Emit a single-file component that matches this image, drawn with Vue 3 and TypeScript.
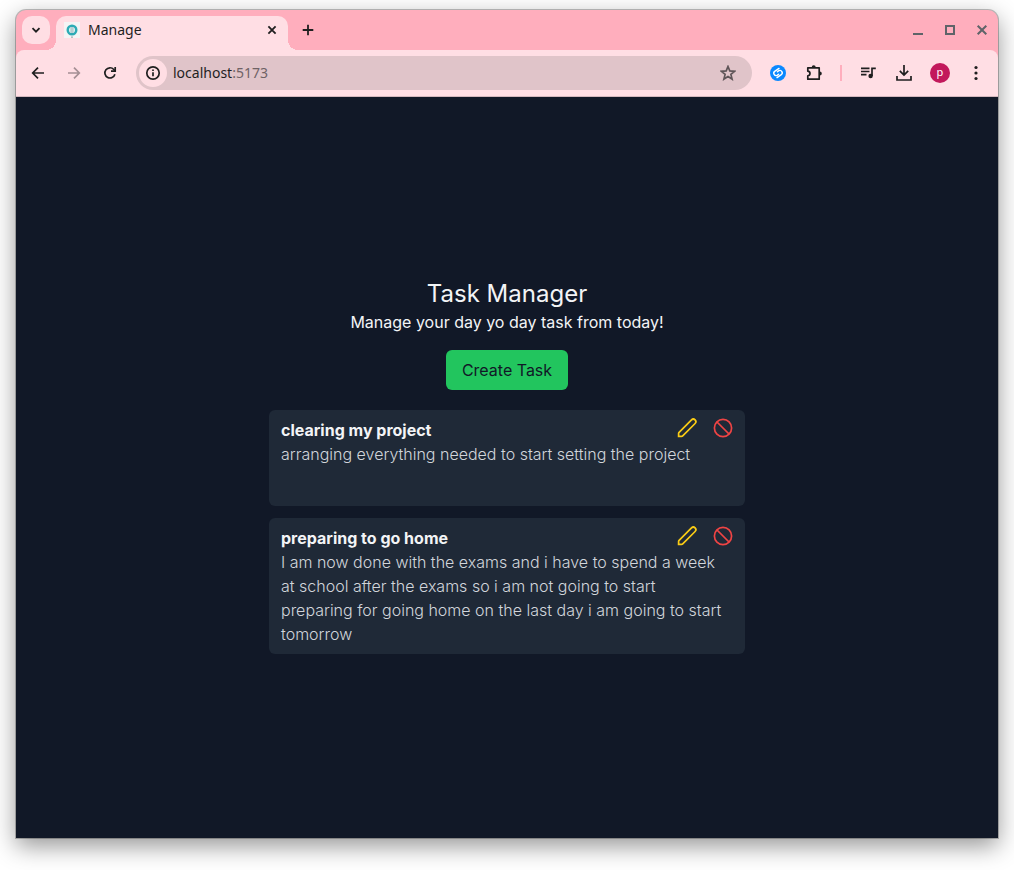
<script setup lang="ts">
import { ref } from 'vue'

interface Task {
  id: number
  title: string
  description: string
}

const address = ref('localhost:5173')

const tasks = ref<Task[]>([
  {
    id: 1,
    title: 'clearing my project',
    description: 'arranging everything needed to start setting the project',
  },
  {
    id: 2,
    title: 'preparing to go home',
    description:
      'I am now done with the exams and i have to spend a week at school after the exams so i am not going to start preparing for going home on the last day i am going to start tomorrow',
  },
])

function removeTask(id: number): void {
  tasks.value = tasks.value.filter((task) => task.id !== id)
}
</script>

<template>
  <div class="desktop">
    <div class="window">
      <header class="tab-strip">
        <button class="tab-search" type="button" aria-label="Search tabs">
          <svg width="16" height="16" viewBox="0 0 16 16"><path d="M4.5 6.2 8 9.7l3.5-3.5" /></svg>
        </button>
        <div class="tab">
          <svg class="favicon" width="16" height="16" viewBox="0 0 16 16">
            <rect width="16" height="16" fill="#f4f4f4" stroke="none" />
            <circle cx="8" cy="8" r="4.3" fill="#d9eff0" stroke="#2cabb5" />
            <rect x="6.4" y="5" width="3.2" height="6" fill="#b5cfd2" stroke="none" />
            <rect x="7" y="14.6" width="2" height="1" fill="#8aa0a3" stroke="none" />
          </svg>
          <span class="tab-title">Manage</span>
          <button class="tab-close" type="button" aria-label="Close tab">
            <svg width="16" height="16" viewBox="0 0 16 16"><path d="m4.4 4.4 7.2 7.2m0-7.2-7.2 7.2" /></svg>
          </button>
        </div>
        <button class="new-tab" type="button" aria-label="New tab">
          <svg width="16" height="16" viewBox="0 0 16 16"><path d="M8 2.7v10.6M2.7 8h10.6" /></svg>
        </button>
        <div class="window-controls">
          <button type="button" aria-label="Minimize">
            <svg width="16" height="16" viewBox="0 0 16 16"><path d="M3 12h10" /></svg>
          </button>
          <button type="button" aria-label="Maximize">
            <svg width="16" height="16" viewBox="0 0 16 16"><path d="M4 4h8v8H4z" /></svg>
          </button>
          <button type="button" aria-label="Close window">
            <svg width="16" height="16" viewBox="0 0 16 16"><path d="m3.7 3.7 8.6 8.6m0-8.6-8.6 8.6" /></svg>
          </button>
        </div>
      </header>

      <nav class="toolbar">
        <button class="tool" type="button" aria-label="Back">
          <svg width="16" height="16" viewBox="0 0 16 16"><path d="M14 8H3M8 2.7 2.7 8 8 13.3" /></svg>
        </button>
        <button class="tool faded" type="button" aria-label="Forward">
          <svg width="16" height="16" viewBox="0 0 16 16"><path d="M2 8h11M8 2.7 13.3 8 8 13.3" /></svg>
        </button>
        <button class="tool" type="button" aria-label="Reload">
          <svg width="16" height="16" viewBox="0 0 16 16">
            <path d="M12.9 9.2A5.1 5.1 0 1 1 11.8 4.5L13.2 6" />
            <path d="M13.2 2v4.2H9" />
          </svg>
        </button>
        <div class="omnibox">
          <button class="site-info" type="button" aria-label="Site information">
            <svg width="16" height="16" viewBox="0 0 16 16">
              <circle cx="8" cy="8" r="6.2" />
              <path d="M8 7.2v4M8 4.4v1.6" />
            </svg>
          </button>
          <label class="address">
            <span class="host" aria-hidden="true">localhost<span class="port">:5173</span></span>
            <input v-model="address" type="text" aria-label="Address" />
          </label>
          <button class="tool star" type="button" aria-label="Bookmark this page">
            <svg width="16" height="16" viewBox="0 0 16 16">
              <path d="m8 1.5 1.8 4.4 4.8.4-3.7 3.1 1.2 4.7L8 11.6l-4.1 2.5 1.2-4.7-3.7-3.1 4.8-.4z" />
            </svg>
          </button>
        </div>
        <button class="tool shazam" type="button" aria-label="Shazam">
          <svg width="16" height="16" viewBox="0 0 16 16">
            <circle cx="8" cy="8" r="8" fill="#0a88ff" stroke="none" />
            <path
              d="M9 3.4 4.7 6.4a2.3 2.3 0 0 0 2.4 3.9l1.5-1.1M7 12.6l4.3-3a2.3 2.3 0 0 0-2.4-3.9L7.4 6.8"
              stroke="#fff"
              stroke-linecap="round"
            />
          </svg>
        </button>
        <button class="tool" type="button" aria-label="Extensions">
          <svg width="18" height="18" viewBox="0 0 18 18">
            <path d="M2.8 3.8h11.4v11.4H2.8v-3.4c2.9-.2 2.9-4.4 0-4.6z" stroke-linejoin="round" />
            <path d="M6.7 3.2a2 2 0 0 1 4 0zM14.8 7.5a2 2 0 0 1 0 4z" fill="#1f1f1f" stroke="none" />
          </svg>
        </button>
        <span class="divider"></span>
        <button class="tool" type="button" aria-label="Media controls">
          <svg width="18" height="18" viewBox="0 0 18 18">
            <path d="M2 4.4h8.5M2 7.5h8.5M2 10.6h5.5M13 12V4.3h3.8" />
            <circle cx="11.6" cy="12" r="2.2" fill="#1f1f1f" stroke="none" />
          </svg>
        </button>
        <button class="tool" type="button" aria-label="Downloads">
          <svg width="18" height="18" viewBox="0 0 18 18">
            <path d="M9 1v10M4.8 6.9 9 11.1l4.2-4.2M2 12v4h14v-4" />
          </svg>
        </button>
        <button class="tool" type="button" aria-label="Profile">
          <span class="avatar">p</span>
        </button>
        <button class="tool" type="button" aria-label="Menu">
          <svg width="16" height="16" viewBox="0 0 16 16">
            <g fill="#1f1f1f" stroke="none">
              <circle cx="8" cy="2.5" r="1.6" />
              <circle cx="8" cy="8" r="1.6" />
              <circle cx="8" cy="13.5" r="1.6" />
            </g>
          </svg>
        </button>
      </nav>

      <main class="page">
        <h1>Task Manager</h1>
        <p class="tagline">Manage your day yo day task from today!</p>
        <button class="create" type="button">Create Task</button>
        <ul class="tasks">
          <li v-for="task in tasks" :key="task.id" class="task">
            <div class="task-head">
              <h2>{{ task.title }}</h2>
              <div class="actions">
                <button class="edit" type="button" :aria-label="`Edit ${task.title}`">
                  <svg width="24" height="24" viewBox="0 0 24 24">
                    <path d="M3.6 20.4v-2.9c0-.5.2-.9.5-1.2L16.5 3.9a2.5 2.5 0 0 1 3.6 3.6L7.7 19.9c-.3.3-.7.5-1.2.5z" />
                  </svg>
                </button>
                <button
                  class="remove"
                  type="button"
                  :aria-label="`Delete ${task.title}`"
                  @click="removeTask(task.id)"
                >
                  <svg width="24" height="24" viewBox="0 0 24 24">
                    <circle cx="12" cy="12" r="8.6" />
                    <path d="m6 6 12 12" />
                  </svg>
                </button>
              </div>
            </div>
            <p>{{ task.description }}</p>
          </li>
        </ul>
      </main>
    </div>
  </div>
</template>

<style>
body {
  margin: 0;
  background: #fff;
}
</style>

<style scoped>
* {
  box-sizing: border-box;
}

button {
  display: flex;
  align-items: center;
  justify-content: center;
  margin: 0;
  padding: 0;
  border: 0;
  background: none;
  color: inherit;
  font: inherit;
  cursor: pointer;
}

svg {
  display: block;
  flex: none;
  fill: none;
  stroke: currentColor;
}

.desktop {
  display: flex;
  min-height: 100vh;
  padding: 10px 16px 32px;
  overflow: hidden;
}

.window {
  display: flex;
  flex: 1;
  flex-direction: column;
  min-width: 0;
  border-radius: 10px 10px 0 0;
  background: #ffaebd;
  box-shadow:
    0 0 0 1px rgba(0, 0, 0, 0.24),
    0 8px 24px rgba(0, 0, 0, 0.42);
  color: #1f1f1f;
  font-family: "Noto Sans", "Open Sans", sans-serif;
  font-size: 14px;
  line-height: 18px;
}

.tab-strip {
  display: flex;
  align-items: center;
  height: 40px;
  padding: 0 8px 0 6px;
}

.tab-strip svg {
  stroke-width: 1.8;
}

.tab-strip .favicon {
  stroke-width: 2.4;
}

.tab-strip .window-controls svg {
  stroke-width: 2;
}

.tab-search {
  width: 28px;
  height: 28px;
  border-radius: 10px;
  background: #ffdee4;
}

.tab {
  position: relative;
  display: flex;
  align-items: center;
  align-self: flex-end;
  width: 232px;
  height: 34px;
  margin-left: 6px;
  padding: 0 8px 6px;
  border-radius: 10px 10px 0 0;
  background: #ffdee4;
}

.tab::before,
.tab::after {
  position: absolute;
  bottom: 0;
  width: 10px;
  height: 10px;
  content: "";
}

.tab::before {
  right: 100%;
  background: radial-gradient(circle at 0 0, transparent 10px, #ffdee4 10px);
}

.tab::after {
  left: 100%;
  background: radial-gradient(circle at 100% 0, transparent 10px, #ffdee4 10px);
}

.tab-title {
  flex: 1;
  margin-left: 8px;
}

.new-tab {
  width: 28px;
  height: 28px;
  margin-left: 6px;
}

.window-controls {
  display: flex;
  gap: 16px;
  margin-left: auto;
  color: #5f6368;
}

.toolbar {
  display: flex;
  gap: 8px;
  align-items: center;
  height: 47px;
  padding: 0 8px;
  border-bottom: 1px solid #d3b7bd;
  border-radius: 8px 8px 0 0;
  background: #ffdee4;
}

.toolbar svg {
  stroke-width: 1.7;
}

.toolbar .shazam svg {
  stroke-width: 1.4;
}

.tool {
  flex: none;
  width: 28px;
  height: 28px;
}

.faded {
  color: #a58f94;
}

.omnibox {
  display: flex;
  flex: 1;
  align-items: center;
  min-width: 0;
  height: 34px;
  margin: 0 4px;
  padding: 0 10px 0 3px;
  border-radius: 17px;
  background: #e0c4c9;
}

.site-info {
  flex: none;
  width: 28px;
  height: 28px;
  border-radius: 50%;
  background: #ffdee4;
}

.address {
  display: grid;
  flex: 1;
  align-items: center;
  min-width: 0;
  margin-left: 6px;
}

.address > * {
  grid-area: 1 / 1;
}

.address input {
  width: 100%;
  height: 18px;
  min-width: 0;
  padding: 0;
  border: 0;
  outline: 0;
  background: none;
  color: transparent;
  caret-color: #1f1f1f;
  font: inherit;
}

.port {
  color: #6f6265;
}

.star {
  color: #5f5558;
}

.divider {
  width: 2px;
  height: 16px;
  margin: 0 4px;
  background: #ffaebd;
}

.avatar {
  width: 20px;
  height: 20px;
  border-radius: 50%;
  background: #c2185b;
  color: #fff;
  font-size: 11px;
  line-height: 18px;
  text-align: center;
}

.page {
  display: flex;
  flex: 1;
  flex-direction: column;
  align-items: center;
  justify-content: center;
  padding: 0 16px 3px;
  background: #111827;
  color: #f3f4f6;
  font-family: Inter, sans-serif;
  font-size: 16px;
  line-height: 24px;
}

h1,
h2,
p {
  margin: 0;
}

h1 {
  font-size: 24px;
  font-weight: 400;
  line-height: 32px;
}

.create {
  height: 40px;
  margin-top: 16px;
  padding: 0 16px;
  border-radius: 6px;
  background: #22c55e;
  color: #111827;
}

.tasks {
  display: flex;
  flex-direction: column;
  gap: 12px;
  width: 100%;
  max-width: 476px;
  margin: 20px 0 0;
  padding: 0;
  list-style: none;
}

.task {
  min-height: 96px;
  padding: 8px 12px;
  border-radius: 6px;
  background: #1f2937;
}

.task-head {
  display: flex;
  align-items: flex-start;
  justify-content: space-between;
}

h2 {
  font-size: 16px;
  font-weight: 700;
}

.task p {
  padding-right: 8px;
  color: #d1d5db;
  font-weight: 300;
}

.actions {
  display: flex;
  gap: 12px;
  margin: -2px -2px -2px 0;
}

.actions svg {
  stroke-width: 1.7;
}

.edit {
  color: #facc15;
}

.remove {
  color: #ef4444;
}
</style>
